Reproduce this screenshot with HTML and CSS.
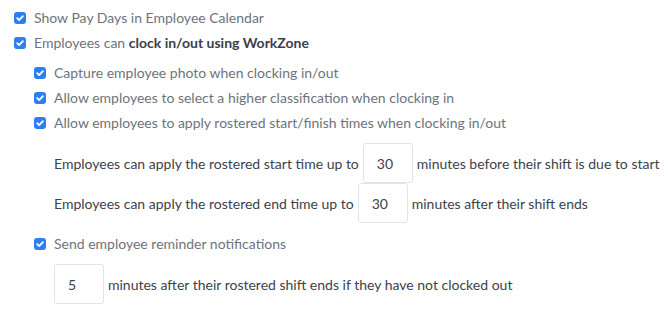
FILE: index.html
```html
<!DOCTYPE html>
<html lang="en">
<head>
  <meta charset="UTF-8">
  <title>WorkZone settings</title>
  <link rel="stylesheet" href="styles.css">
</head>
<body>
  <div class="ajustes">
    <label class="opcion">
      <span class="check"><svg viewBox="0 0 12 12"><path d="M3.2 6.2 5.1 8.1 8.9 4.1"/></svg></span>
      <span>Show Pay Days in Employee Calendar</span>
    </label>
    <label class="opcion">
      <span class="check"><svg viewBox="0 0 12 12"><path d="M3.2 6.2 5.1 8.1 8.9 4.1"/></svg></span>
      <span>Employees can <b>clock in/out using WorkZone</b></span>
    </label>

    <div class="grupo">
      <label class="opcion">
        <span class="check"><svg viewBox="0 0 12 12"><path d="M3.2 6.2 5.1 8.1 8.9 4.1"/></svg></span>
        <span>Capture employee photo when clocking in/out</span>
      </label>
      <label class="opcion">
        <span class="check"><svg viewBox="0 0 12 12"><path d="M3.2 6.2 5.1 8.1 8.9 4.1"/></svg></span>
        <span>Allow employees to select a higher classification when clocking in</span>
      </label>
      <label class="opcion">
        <span class="check"><svg viewBox="0 0 12 12"><path d="M3.2 6.2 5.1 8.1 8.9 4.1"/></svg></span>
        <span>Allow employees to apply rostered start/finish times when clocking in/out</span>
      </label>

      <div class="campos">
        <div class="fila">
          <span>Employees can apply the rostered start time up to</span>
          <input class="minutos" type="text" value="30">
          <span>minutes before their shift is due to start</span>
        </div>
        <div class="fila">
          <span>Employees can apply the rostered end time up to</span>
          <input class="minutos" type="text" value="30">
          <span>minutes after their shift ends</span>
        </div>
      </div>

      <label class="opcion aviso">
        <span class="check"><svg viewBox="0 0 12 12"><path d="M3.2 6.2 5.1 8.1 8.9 4.1"/></svg></span>
        <span>Send employee reminder notifications</span>
      </label>
      <div class="campos">
        <div class="fila">
          <input class="minutos" type="text" value="5">
          <span>minutes after their rostered shift ends if they have not clocked out</span>
        </div>
      </div>
    </div>
  </div>
</body>
</html>
```

FILE: styles.css
```css
body {
  margin: 0;
  font-family: Lato, "Liberation Sans", sans-serif;
  font-size: 14px;
  color: #6e737b;
  background: #fff;
}
.ajustes {
  padding: 5px 0 0 14px;
}
.opcion {
  display: flex;
  align-items: center;
  height: 25px;
  white-space: nowrap;
}
.opcion b {
  color: #3a404b;
  font-weight: 700;
}
.check {
  flex: none;
  width: 12px;
  height: 12px;
  border-radius: 3px;
  background: #2d7ff0;
  margin-right: 8px;
  display: flex;
}
.check svg {
  width: 12px;
  height: 12px;
}
.check path {
  fill: none;
  stroke: #fff;
  stroke-width: 1.8;
  stroke-linecap: round;
  stroke-linejoin: round;
}
.grupo {
  padding: 5px 0 0 20px;
}
.campos {
  padding: 8px 0 0 20px;
  color: #3c424c;
}
.fila {
  display: flex;
  align-items: center;
  gap: 4px;
  height: 40px;
  white-space: nowrap;
}
.minutos {
  box-sizing: border-box;
  width: 50px;
  height: 40px;
  margin: 0;
  padding: 0 0 0 13px;
  border: 1px solid #dfe5e8;
  border-radius: 3px;
  font-family: inherit;
  font-size: 14px;
  color: #3c424c;
  outline: none;
}
.aviso {
  margin-top: 8px;
}
```
